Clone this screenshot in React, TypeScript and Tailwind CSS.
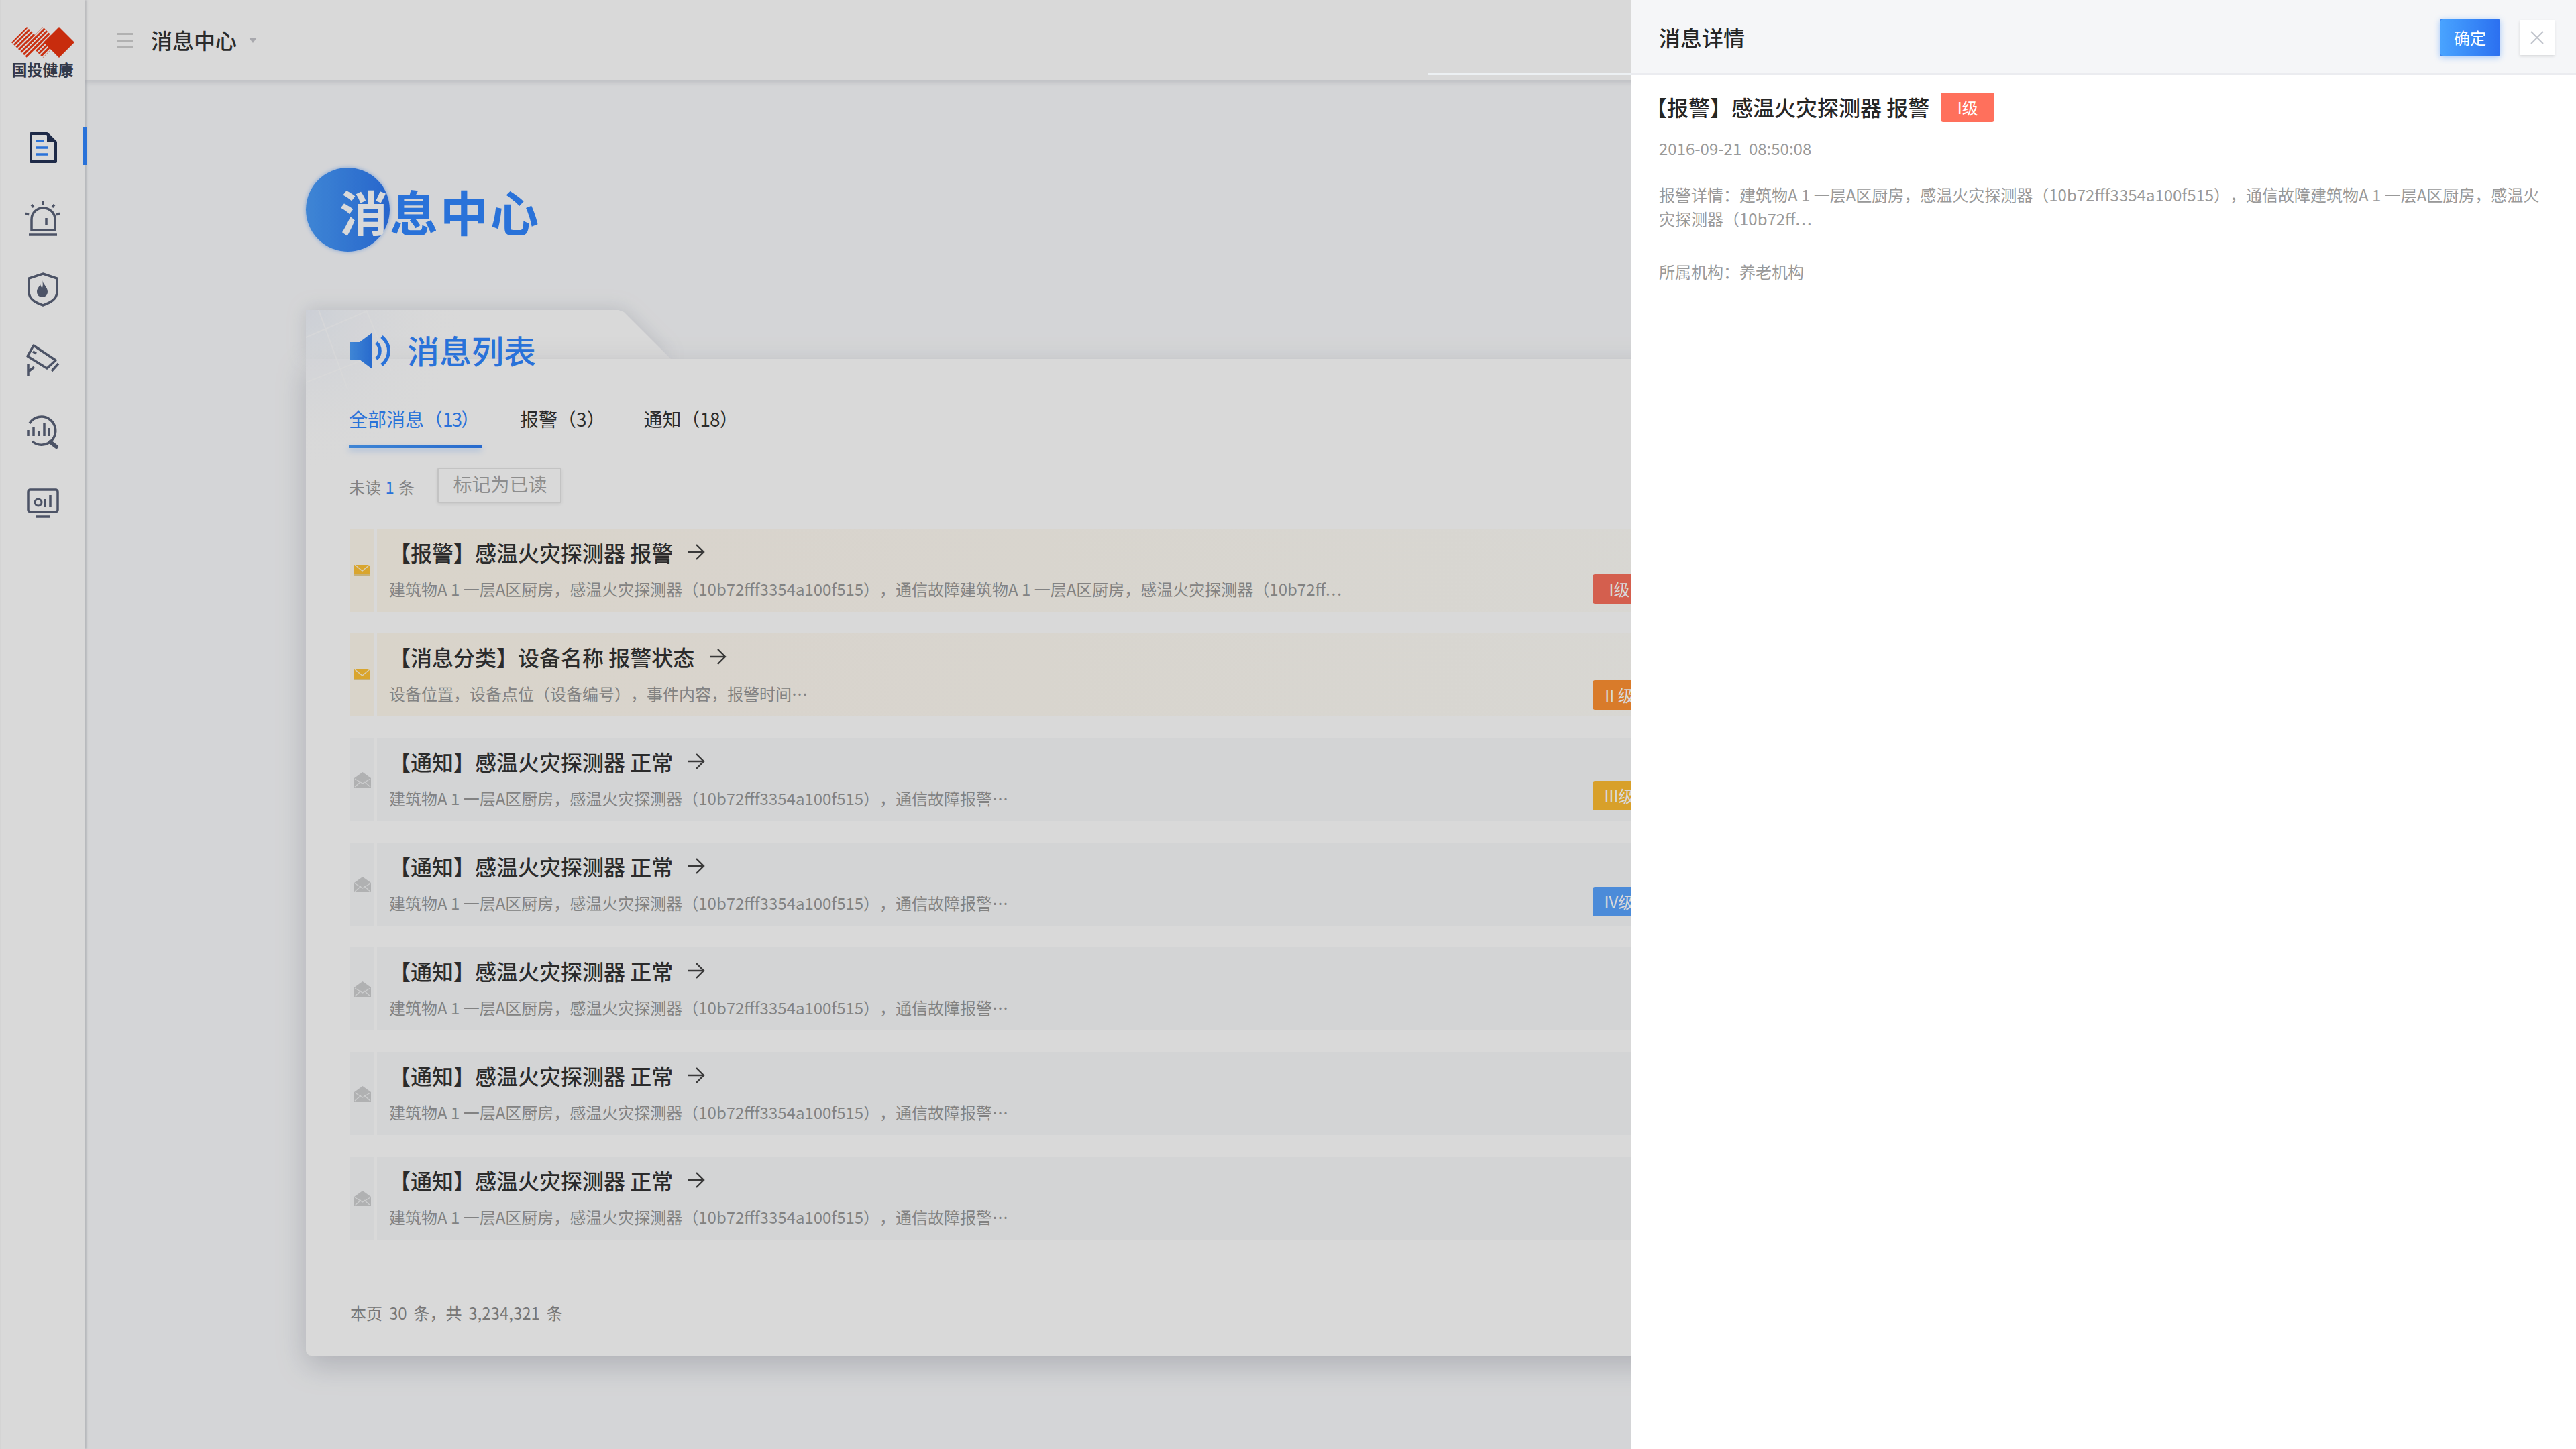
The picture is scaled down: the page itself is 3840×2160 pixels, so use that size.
import React from "react";

const FONT = "[font-family:'Noto_Sans_CJK_SC','Noto_Sans',sans-serif] [text-spacing-trim:space-all]";
const SLATE = "#5a6278";

function Logo() {
  return (
    <div className="-ml-[2px] flex h-[120px] flex-col items-center pt-[40px]">
      <svg width="94" height="46" viewBox="16 40 94 46">
        <defs>
          <pattern id="hatch" width="5" height="5" patternUnits="userSpaceOnUse" patternTransform="rotate(-45)">
            <rect width="5" height="3" fill="#ee3a16" />
          </pattern>
        </defs>
        <polygon points="39,40 62,63 39,86 16,63" fill="url(#hatch)" />
        <polygon points="63,40 86,63 63,86 40,63" fill="url(#hatch)" />
        <polygon points="87,40 110,63 87,86 64,63" fill="#ec3410" />
      </svg>
      <span className="mt-[5px] text-[23px] leading-[24px] font-bold whitespace-nowrap text-[#3d4356]">国投健康</span>
    </div>
  );
}

function Slot({ cy, active, children }: { cy: number; active?: boolean; children: React.ReactNode }) {
  return (
    <div className="relative flex h-[106px] items-center justify-center">
      <svg width="64" height="64" viewBox={`32 ${cy - 32} 64 64`} fill="none" stroke={SLATE} strokeWidth="3.5">
        {children}
      </svg>
      {active && <div className="absolute top-[24px] right-[-3px] h-[56px] w-[6px] bg-[#3186ff]" />}
    </div>
  );
}

function Sidebar() {
  return (
    <aside className="relative z-10 flex h-full w-[127px] shrink-0 flex-col border-l-2 border-[#fafafa] bg-white shadow-[2px_0_3px_rgba(90,95,110,0.25)]">
      <Logo />
      <div className="mt-[46px] -ml-[2px] flex flex-col">
        <Slot cy={219} active>
          <path d="M46 199H70L83 212V241H46Z" stroke="#243255" strokeWidth="4" strokeLinejoin="round" />
          <path d="M70 198L84 212H70Z" fill="#243255" stroke="none" />
          <path d="M54 210H65M54 220H72M54 230H72" stroke="#3186ff" />
        </Slot>
        <Slot cy={325}>
          <path d="M47 343V327C47 317 55 310 64 310C74 310 82 317 82 327V343Z" />
          <path d="M43 350H85M69 325V335" />
          <path d="M64 300V306M47 305L50 309M81 305L78 309M38 318L43 320M89 318L84 320" />
        </Slot>
        <Slot cy={431}>
          <path d="M64 408L85 415V435C85 446 75 451 64 455C53 451 43 446 43 435V415Z" />
          <path d="M63 418C65 425 71 428 71 435C71 440 67 443 63 443C59 443 55 440 55 435C55 430 58 428 60 424C61 427 62 429 63 429C64 426 64 422 63 418Z" fill={SLATE} stroke="none" />
        </Slot>
        <Slot cy={537}>
          <path d="M50 515L83 537L70 549L41 531Z" strokeLinejoin="round" />
          <path d="M87 542L77 553M42 543V561M42 554L51 547M49 524L54 527" />
        </Slot>
        <Slot cy={643}>
          <path d="M44 631A21 21 0 1 1 48 658" />
          <path d="M42 641V650M50 637V650M58 643V650M66 631V650M73 638V650" />
          <path d="M75 659L84 666" strokeWidth="6" strokeLinecap="round" />
        </Slot>
        <Slot cy={749}>
          <rect x="42" y="730" width="44" height="33" rx="3" />
          <path d="M53 770H75" />
          <circle cx="57" cy="749" r="5" strokeWidth="3" />
          <path d="M67 744V756M75 738V756" />
        </Slot>
      </div>
    </aside>
  );
}

function TopBar() {
  return (
    <header className="relative z-[5] flex h-[120px] items-center bg-white pl-[47px] shadow-[0_2px_8px_rgba(90,95,110,0.2)]">
      <div className="flex w-[24px] flex-col gap-[7px]">
        <div className="h-[3px] bg-[#d0d0d0]" />
        <div className="h-[3px] bg-[#d0d0d0]" />
        <div className="h-[3px] bg-[#d0d0d0]" />
      </div>
      <span className="ml-[27px] pb-[3px] text-[32px] leading-[44px] font-medium text-[#333]">消息中心</span>
      <svg className="ml-[18px]" width="12" height="8" viewBox="0 0 12 8">
        <path d="M0 0H12L6 8Z" fill="#c6c6cc" />
      </svg>
    </header>
  );
}

function Speaker() {
  return (
    <svg width="60" height="54" viewBox="0 0 60 54" fill="none">
      <defs>
        <linearGradient id="sp" x1="0" x2="1" y1="0" y2="0">
          <stop offset="0" stopColor="#4a9dfa" />
          <stop offset="1" stopColor="#2f7df2" />
        </linearGradient>
      </defs>
      <path d="M0 14H14L33 0V54L14 40H0Z" fill="url(#sp)" />
      <path d="M39 15C46 21 46 33 39 39" stroke="#3186ff" strokeWidth="5" />
      <path d="M47 6C61 18 61 36 47 48" stroke="#3186ff" strokeWidth="5" />
    </svg>
  );
}

function MailClosed() {
  return (
    <svg width="24" height="16" viewBox="0 0 24 16">
      <rect width="24" height="16" fill="#ffc236" />
      <path d="M1 0L12 9L23 0" fill="none" stroke="#fff3d6" strokeWidth="1.4" />
      <rect y="14" width="24" height="2" fill="#ecd08c" />
    </svg>
  );
}

function MailOpen() {
  return (
    <svg width="25" height="23" viewBox="0 0 25 23">
      <path d="M0 9L12.5 0L25 9V23H0Z" fill="#cfd0d2" />
      <path d="M1 10L12.5 17L24 10M1 22L10 14M24 22L15 14" fill="none" stroke="#f1f2f3" strokeWidth="1.4" />
    </svg>
  );
}

function Arrow() {
  return (
    <svg width="26" height="24" viewBox="0 0 26 24" fill="none" stroke="#444" strokeWidth="2.4">
      <path d="M1 12H24M13 1L24 12L13 23" />
    </svg>
  );
}

const Dots = () => <span className="tracking-[2px]">...</span>;

type Row = {
  title: string;
  desc: React.ReactNode;
  unread?: boolean;
  badge?: { text: string; cls: string; top: string };
};

const NOTE = "建筑物A 1 一层A区厨房，感温火灾探测器（10b72fff3354a100f515），通信故障报警…";

const rows: Row[] = [
  {
    title: "【报警】感温火灾探测器 报警",
    desc: (
      <>
        建筑物A 1 一层A区厨房，感温火灾探测器（10b72fff3354a100f515），通信故障建筑物A 1 一层A区厨房，感温火灾探测器（10b72ff
        <Dots />
      </>
    ),
    unread: true,
    badge: { text: "I级", cls: "bg-[#fa705c]", top: "top-[68px]" },
  },
  {
    title: "【消息分类】设备名称 报警状态",
    desc: "设备位置，设备点位（设备编号），事件内容，报警时间…",
    unread: true,
    badge: { text: "II 级", cls: "bg-[#ff9132]", top: "top-[70px]" },
  },
  { title: "【通知】感温火灾探测器 正常", desc: NOTE, badge: { text: "III级", cls: "bg-[#febc32]", top: "top-[64px]" } },
  { title: "【通知】感温火灾探测器 正常", desc: NOTE, badge: { text: "IV级", cls: "bg-[#59a4ff]", top: "top-[66px]" } },
  { title: "【通知】感温火灾探测器 正常", desc: NOTE },
  { title: "【通知】感温火灾探测器 正常", desc: NOTE },
  { title: "【通知】感温火灾探测器 正常", desc: NOTE },
];

function MessageRow({ row }: { row: Row }) {
  return (
    <div className="relative flex h-[124px]">
      <div className={`flex w-[36px] shrink-0 items-center justify-center ${row.unread ? "bg-[#fff9ee]" : "bg-[#f8f9fb]"}`}>
        {row.unread ? <MailClosed /> : <MailOpen />}
      </div>
      <div
        className={`ml-[4px] flex-1 pt-[13px] pl-[18px] ${
          row.unread ? "bg-gradient-to-r from-[#fff9ee] to-[#fefdf8]" : "bg-[#f8f9fb]"
        }`}
      >
        <div className="flex items-center">
          <span className="text-[32px] leading-[44px] font-medium whitespace-nowrap text-[#333]">{row.title}</span>
          <span className="ml-[22px] flex">
            <Arrow />
          </span>
        </div>
        <div className="mt-[15px] text-[24px] leading-[36px] whitespace-nowrap text-[#999]">{row.desc}</div>
      </div>
      {row.badge && (
        <span
          className={`absolute right-[66px] ${row.badge.top} flex h-[44px] w-[80px] items-center justify-center rounded-[4px] text-[24px] text-white ${row.badge.cls}`}
        >
          {row.badge.text}
        </span>
      )}
    </div>
  );
}

function Card() {
  return (
    <section className="relative mt-[87px] w-[2084px] pt-[34px] pr-[20px] pb-[46px] pl-[64px]">
      {/* card surface: tab plus body */}
      <div className="absolute top-0 left-0 h-[90px] w-[560px] [filter:drop-shadow(0_-2px_14px_rgba(90,95,110,0.18))]">
        <div className="h-[73px] w-[544px] bg-white [clip-path:polygon(0_0,466px_0,474px_3px,544px_73px,0_73px)]" />
      </div>
      <div className="absolute top-[73px] right-0 bottom-0 left-0 rounded-b-[8px] bg-white shadow-[0_14px_44px_rgba(90,95,110,0.28)]" />
      <svg className="absolute top-0 left-0" width="240" height="240" viewBox="0 0 240 240" fill="none">
        <defs>
          <radialGradient id="deco" cx="0" cy="0" r="1">
            <stop offset="0" stopColor="#f0f4fc" />
            <stop offset="1" stopColor="#ffffff" stopOpacity="0" />
          </radialGradient>
        </defs>
        <path d="M0 0H240V240H0Z" fill="url(#deco)" />
        <path d="M19 0L62 118M90 0L127 91M0 41L90 2M0 108L127 58" stroke="#ffffff" strokeOpacity="0.7" strokeWidth="2" />
      </svg>

      <div className="relative">
        <div className="ml-[2px] flex h-[54px] items-center gap-[25px]">
          <Speaker />
          <h2 className="pb-[5px] text-[48px] leading-[54px] font-medium text-[#3186ff]">消息列表</h2>
        </div>

        <div className="mt-[54px] flex gap-[57px] text-[28px] leading-[40px] whitespace-nowrap">
          <div className="relative w-[198px] pb-[20px] text-[#3186ff]">
            全部消息（<span className="tracking-[-2px]">13</span>）
            <div className="absolute right-0 bottom-[-4px] left-0 h-[4px] bg-gradient-to-r from-[#4a9dfa] to-[#2f7df2] shadow-[0_4px_8px_rgba(49,134,255,0.35)]" />
          </div>
          <div className="text-[#333]">报警（3）</div>
          <div className="text-[#333]">
            通知（<span className="tracking-[-1px]">18</span>）
          </div>
        </div>

        <div className="mt-[33px] flex items-center gap-[34px]">
          <span className="mt-[4px] text-[24px] leading-[36px] [word-spacing:1px] whitespace-nowrap text-[#999]">
            未读 <span className="text-[#3186ff]">1</span> 条
          </span>
          <button className="flex h-[53px] w-[185px] items-center justify-center rounded-[2px] border-2 border-[#e6e6e6] bg-white pb-[5px] pl-[2px] text-[28px] text-[#a6a6a6] shadow-[0_2px_4px_rgba(0,0,0,0.08)]">
            标记为已读
          </button>
        </div>

        <div className="mt-[38px] ml-[2px] flex flex-col gap-[32px]">
          {rows.map((r, i) => (
            <MessageRow key={i} row={r} />
          ))}
        </div>

        <div className="mt-[91px] ml-[2px] text-[24px] leading-[36px] [word-spacing:4.5px] text-[#8c8c8c]">本页 30 条，共 3,234,321 条</div>
      </div>
    </section>
  );
}

function Drawer() {
  return (
    <aside className="absolute top-0 right-0 bottom-0 z-30 w-[1408px] bg-white">
      <div className="relative flex h-[112px] items-center border-b-[3px] border-[#ebecf0] bg-[#f5f6f8] pr-[32px] pl-[41px]">
        <div className="absolute top-[109px] right-full h-[3px] w-[304px] bg-[#ecf0f3]" />
        <h3 className="text-[32px] leading-[44px] font-medium text-[#262626]">消息详情</h3>
        <button className="mt-[3px] ml-auto flex h-[56px] w-[90px] items-center justify-center rounded-[4px] border border-[#2f74e8] bg-gradient-to-r from-[#49a3ff] to-[#2c70f0] text-[24px] text-white shadow-[0_2px_10px_rgba(49,134,255,0.4)]">
          确定
        </button>
        <button className="mt-[3px] ml-[29px] flex h-[52px] w-[52px] items-center justify-center bg-white shadow-[0_2px_4px_rgba(0,0,0,0.12)]">
          <svg width="20" height="20" viewBox="0 0 20 20" stroke="#c0c4cc" strokeWidth="2">
            <path d="M1 1L19 19M19 1L1 19" />
          </svg>
        </button>
      </div>
      <div className="px-[41px] pt-[26px]">
        <div className="flex h-[44px] items-center">
          <span className="-ml-[20px] pb-[3px] text-[32px] leading-[44px] font-medium whitespace-nowrap text-[#262626]">【报警】感温火灾探测器 报警</span>
          <span className="ml-[17px] flex h-[44px] w-[80px] items-center justify-center rounded-[4px] bg-[#ff705c] text-[24px] text-white">I级</span>
        </div>
        <div className="mt-[21px] text-[24px] leading-[36px] whitespace-pre text-[#999]">2016-09-21  08:50:08</div>
        <p className="mt-[33px] w-[1326px] text-[24px] leading-[36px] text-[#999]">
          报警详情：建筑物A 1 一层A区厨房，感温火灾探测器（10b72fff3354a100f515），通信故障建筑物A 1 一层A区厨房，感温火灾探测器（10b72ff
          <Dots />
        </p>
        <div className="mt-[43px] text-[24px] leading-[36px] text-[#999]">所属机构：养老机构</div>
      </div>
    </aside>
  );
}

export default function App() {
  return (
    <div className={`relative flex h-[2160px] w-[3840px] overflow-hidden bg-[#fafbfd] ${FONT}`}>
      <Sidebar />
      <div className="flex min-w-0 flex-1 flex-col">
        <TopBar />
        <main className="pl-[329px]">
          <div className="relative mt-[130px] flex h-[125px] items-center">
            <div className="h-[125px] w-[125px] rounded-full bg-gradient-to-r from-[#4a9dfa] to-[#2f78f0] shadow-[0_0_6px_rgba(49,134,255,0.5)]" />
            <h1 className="relative mt-[3px] -ml-[75px] text-[72px] leading-[90px] font-bold tracking-[3px] whitespace-nowrap text-[#3186ff]">
              <span className="text-white">消</span>息中心
            </h1>
          </div>
          <Card />
        </main>
      </div>
      <div className="absolute inset-0 z-20 bg-black/15" />
      <Drawer />
    </div>
  );
}
